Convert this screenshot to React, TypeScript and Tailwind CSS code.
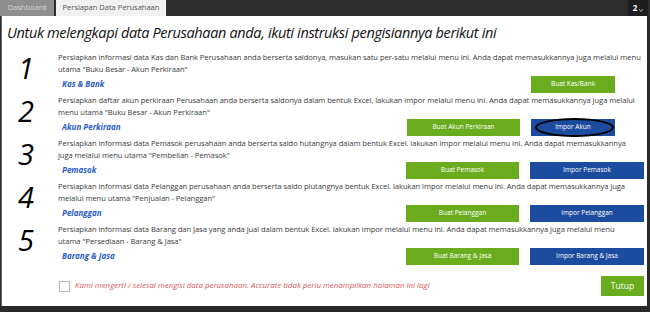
import React from "react";

const rows = [
  {
    n: "1",
    l1: "Persiapkan informasi data Kas dan Bank Perusahaan anda berserta saldonya, masukan satu per-satu melalui menu ini. Anda dapat memasukkannya juga melalui menu",
    l2: 'utama "Buku Besar - Akun Perkiraan"',
    label: "Kas & Bank",
  },
  {
    n: "2",
    l1: "Persiapkan daftar akun perkiraan Perusahaan anda berserta saldonya dalam bentuk Excel, lakukan impor melalui menu ini. Anda dapat memasukkannya juga melalui",
    l2: 'menu utama "Buku Besar - Akun Perkiraan"',
    label: "Akun Perkiraan",
    green: "Buat Akun Perkiraan",
  },
  {
    n: "3",
    l1: "Persiapkan informasi data Pemasok perusahaan anda berserta saldo hutangnya dalam bentuk Excel. lakukan impor melalui menu ini. Anda dapat memasukkannya",
    l2: 'juga melalui menu utama "Pembelian - Pemasok"',
    label: "Pemasok",
    green: "Buat Pemasok",
    blue: "Impor Pemasok",
  },
  {
    n: "4",
    l1: "Persiapkan informasi data Pelanggan perusahaan anda berserta saldo piutangnya bentuk Excel. lakukan impor melalui menu ini. Anda dapat memasukkannya juga",
    l2: 'melalui menu utama "Penjualan - Pelanggan"',
    label: "Pelanggan",
    green: "Buat Pelanggan",
    blue: "Impor Pelanggan",
  },
  {
    n: "5",
    l1: "Persiapkan informasi data Barang dan Jasa yang anda jual dalam bentuk Excel. lakukan impor melalui menu ini. Anda dapat memasukkannya juga melalui menu",
    l2: 'utama "Persediaan - Barang & Jasa"',
    label: "Barang & Jasa",
    green: "Buat Barang & Jasa",
    blue: "Impor Barang & Jasa",
  },
];

const font = { fontFamily: '"Open Sans", "Noto Sans", sans-serif' };

export default function App() {
  return (
    <div
      className="w-[650px] h-[312px] bg-[#2a2a2a] flex flex-col overflow-hidden"
      style={font}
    >
      {/* top bar */}
      <div className="h-[16px] flex items-end bg-[#2d2d2d] shrink-0">
        <div className="h-[16px] w-[54px] bg-[#8e8e8e] text-[#d4d4d4] text-[7.5px] flex items-center justify-center">
          Dashboard
        </div>
        <div className="h-[16px] ml-[2px] w-[110px] bg-[#f1f1f1] text-[#555] text-[7.5px] flex items-center justify-center">
          Persiapan Data Perusahaan
        </div>
        <div className="flex-1" />
        <div className="h-[16px] w-[20px] bg-[#1d1d1d] text-white text-[8px] font-bold flex items-center justify-center gap-[2px] mr-[2px]">
          <span>2</span>
          <svg width="4" height="3" viewBox="0 0 4 3" className="mt-[4px]">
            <path d="M0 0 L2 2.5 L4 0" stroke="#ccc" strokeWidth="0.8" fill="none" />
          </svg>
        </div>
      </div>

      {/* content */}
      <div className="h-[290px] ml-[1px] mr-[3px] bg-white border-l border-[#6b6b6b] flex flex-col shrink-0 relative">
        <div className="pl-[5px] pt-[6px] h-[35px] text-[14.5px] italic text-[#111] tracking-[-0.35px]">
          Untuk melengkapi data Perusahaan anda, ikuti instruksi pengisiannya berikut ini
        </div>
        <div className="flex flex-col">
          {rows.map((r, i) => (
            <div key={r.n} className="grid grid-cols-[56px_minmax(0,1fr)] h-[43px]">
              <div className="pl-[16px] pt-[2px] text-[29px] italic leading-none text-black">
                {r.n}
              </div>
              <div className="flex flex-col pr-[3px] min-w-0">
                <div className="text-[7.6px] leading-[12px] text-[#3a3a3a] h-[24px] tracking-[-0.06px] whitespace-nowrap">
                  <div>{r.l1}</div>
                  <div>{r.l2}</div>
                </div>
                <div className="flex items-center h-[18px]">
                  <span className="pl-[4px] text-[8px] font-bold italic text-[#2b5cc8] flex-1">
                    {r.label}
                  </span>
                  {i === 0 ? (
                    <div className="w-[84px] h-[17px] bg-[#6aac1d] text-white text-[6.5px] flex items-center justify-center mr-[29px]">
                      Buat Kas/Bank
                    </div>
                  ) : (
                    <>
                      <div className="w-[113px] h-[17px] bg-[#6aac1d] text-white text-[6.5px] flex items-center justify-center">
                        {r.green}
                      </div>
                      {i === 1 ? (
                        <div className="relative ml-[11px] mr-[29px] w-[84px] h-[17px] bg-[#1b4c9f] text-white text-[6.5px] flex items-center justify-center">
                          Impor Akun
                          <div className="absolute left-[4px] right-[1px] top-[-1px] bottom-[-1px] rounded-[50%] border-2 border-black" />
                        </div>
                      ) : (
                        <div className="ml-[11px] w-[114px] h-[17px] bg-[#1b4c9f] text-white text-[6.5px] flex items-center justify-center">
                          {r.blue}
                        </div>
                      )}
                    </>
                  )}
                </div>
              </div>
            </div>
          ))}
        </div>
        <div className="flex items-center pl-[57px] pr-[3px] mt-[10px] h-[20px]">
          <div className="w-[11px] h-[11px] border border-[#b5b5b5] bg-white" />
          <span className="ml-[5px] text-[7.9px] italic text-[#d35a5a] flex-1">
            Kami mengerti / selesai mengisi data perusahaan. Accurate tidak perlu menampilkan halaman ini lagi
          </span>
          <div className="w-[43px] h-[20px] bg-[#6aac1d] text-white text-[8.5px] flex items-center justify-center">
            Tutup
          </div>
        </div>
      </div>
    </div>
  );
}
